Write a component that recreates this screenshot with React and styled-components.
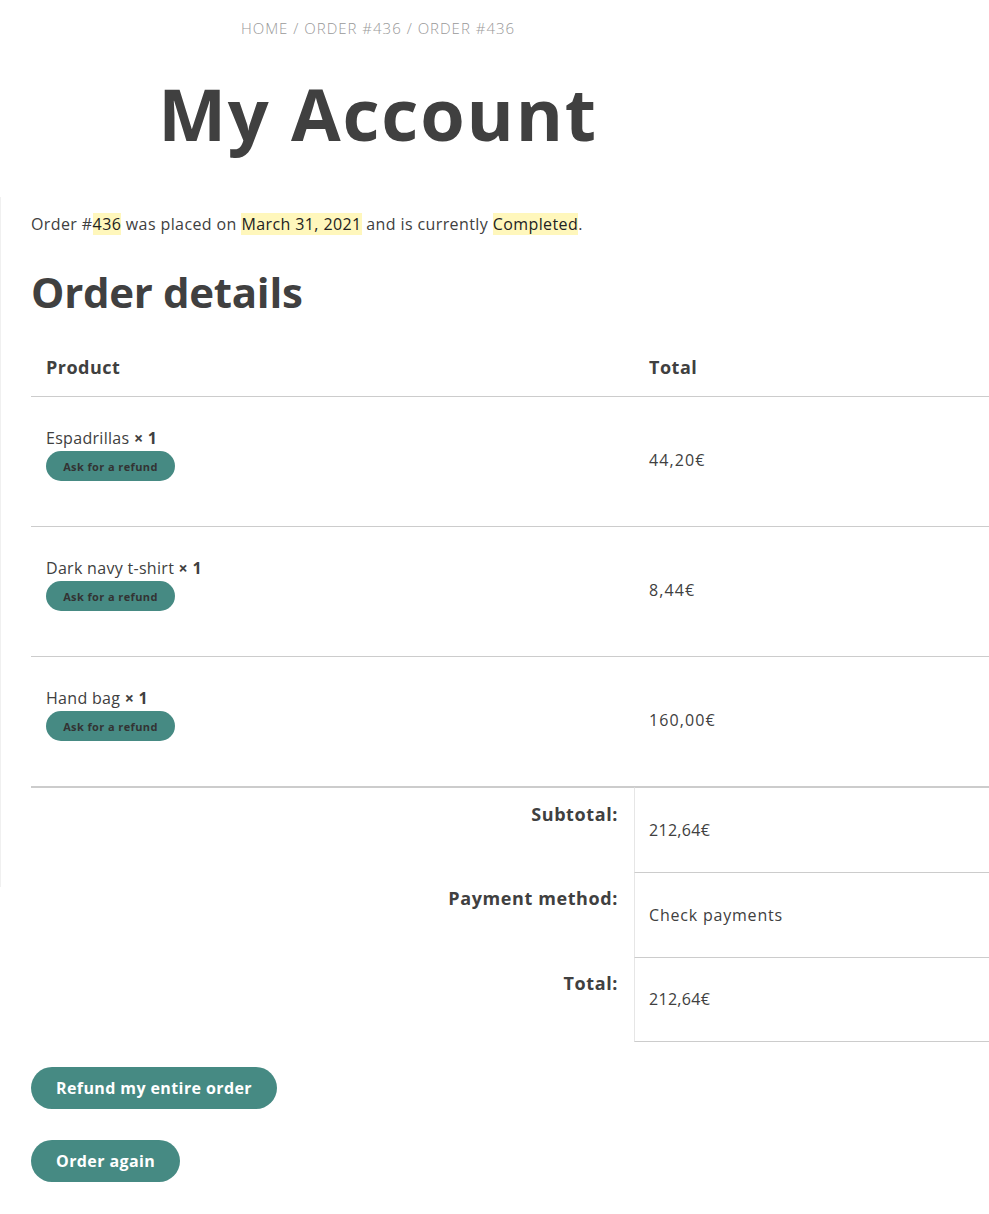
import React from 'react';
import styled, {createGlobalStyle} from 'styled-components';

const Global = createGlobalStyle`
  body{
    margin:0;
    background:#fff;
    font-family:"Open Sans", "Liberation Sans", sans-serif;
    color:#404040;
  }
  *{box-sizing:border-box;}
`;

const Page = styled.div`
  width:989px;
  overflow:hidden;
`;

const Header = styled.header`
  width:756px;
  text-align:center;
  padding-top:17px;
`;

const Crumbs = styled.div`
  font-size:15px;
  font-weight:300;
  color:#999;
  text-transform:uppercase;
  line-height:22px;
  letter-spacing:1px;
`;

const Title = styled.h1`
  margin:32px 0 0;
  font-size:72px;
  font-weight:700;
  line-height:84px;
  letter-spacing:1.8px;
  color:#404040;
`;

const Content = styled.main`
  margin-top:42px;
  padding:15px 0 0 31px;
  position:relative;
  &::before{
    content:'';
    position:absolute;
    left:0;top:0;
    width:1px;height:690px;
    background:#f0f0f0;
  }
`;

const Notice = styled.p`
  margin:0;
  font-size:16px;
  line-height:24px;
  font-weight:400;
  letter-spacing:0.4px;
`;

const Mark = styled.mark`
  background:#fff7bc;
  color:#222;
`;

const Heading = styled.h2`
  margin:28px 0 0;
  font-size:42px;
  line-height:56px;
  font-weight:700;
  letter-spacing:-0.3px;
`;

const Table = styled.div`
  margin-top:18px;
  display:grid;
  grid-template-columns:603px 355px;
`;

const HeadCell = styled.div`
  height:59px;
  display:flex;
  align-items:center;
  padding:0 15px;
  font-size:18px;
  font-weight:700;
  letter-spacing:0.5px;
  border-bottom:1px solid #ccc;
`;

const ProductCell = styled.div`
  height:130px;
  padding:31px 15px 0;
  border-bottom:1px solid #ccc;
  font-size:16px;
  line-height:20px;
  letter-spacing:0.3px;
`;

const PriceCell = styled.div`
  height:130px;
  display:flex;
  align-items:center;
  padding:0 15px 3px;
  border-bottom:1px solid #ccc;
  font-size:16px;
  letter-spacing:1.1px;
`;

const Qty = styled.strong`
  font-weight:700;
`;

const SmallBtn = styled.button`
  display:block;
  margin-top:3px;
  width:129px;
  height:30px;
  border:0;
  border-radius:15px;
  background:#468a83;
  color:#333;
  font-family:inherit;
  font-size:11px;
  font-weight:700;
  letter-spacing:0.4px;
  cursor:pointer;
`;

const FootLabel = styled.div`
  height:85px;
  padding:14px 16px 0;
  text-align:right;
  font-size:18px;
  font-weight:700;
  line-height:24px;
  letter-spacing:0.6px;
  border-top:${({first}) => first ? '1px solid #ccc' : '0'};
`;

const FootValue = styled.div`
  height:85px;
  display:flex;
  align-items:center;
  padding:0 14px 1px;
  font-size:16px;
  letter-spacing:${({money}) => money ? '0.3px' : '0.8px'};
  border-left:1px solid #e6e6e6;
  border-top:1px solid #ccc;
  border-bottom:${({last}) => last ? '1px solid #ccc' : '0'};
`;

const Actions = styled.div`
  display:flex;
  flex-direction:column;
  align-items:flex-start;
  gap:31px;
  margin-top:25px;
  padding-bottom:32px;
`;

const BigBtn = styled.button`
  height:42px;
  padding:0 25px;
  border:0;
  border-radius:21px;
  background:#468a83;
  color:#fff;
  font-family:inherit;
  font-size:16px;
  font-weight:700;
  letter-spacing:0.4px;
  cursor:pointer;
`;

const items = [
  {name:'Espadrillas', total:'44,20€'},
  {name:'Dark navy t-shirt', total:'8,44€'},
  {name:'Hand bag', total:'160,00€'},
];

const totals = [
  {label:'Subtotal:', value:'212,64€', money:true},
  {label:'Payment method:', value:'Check payments'},
  {label:'Total:', value:'212,64€', money:true},
];

export default function App(){
  return (
    <Page>
      <Global/>
      <Header>
        <Crumbs>Home / Order #436 / Order #436</Crumbs>
        <Title>My Account</Title>
      </Header>
      <Content>
        <Notice>
          Order #<Mark>436</Mark> was placed on <Mark>March 31, 2021</Mark> and is currently <Mark>Completed</Mark>.
        </Notice>
        <Heading>Order details</Heading>
        <Table>
          <HeadCell>Product</HeadCell>
          <HeadCell>Total</HeadCell>
          {items.map(it => (
            <React.Fragment key={it.name}>
              <ProductCell>
                {it.name} <Qty>× 1</Qty>
                <SmallBtn>Ask for a refund</SmallBtn>
              </ProductCell>
              <PriceCell>{it.total}</PriceCell>
            </React.Fragment>
          ))}
          {totals.map((t, i) => (
            <React.Fragment key={t.label}>
              <FootLabel first={i === 0}>{t.label}</FootLabel>
              <FootValue money={t.money} last={i === totals.length - 1}>{t.value}</FootValue>
            </React.Fragment>
          ))}
        </Table>
        <Actions>
          <BigBtn>Refund my entire order</BigBtn>
          <BigBtn>Order again</BigBtn>
        </Actions>
      </Content>
    </Page>
  );
}
